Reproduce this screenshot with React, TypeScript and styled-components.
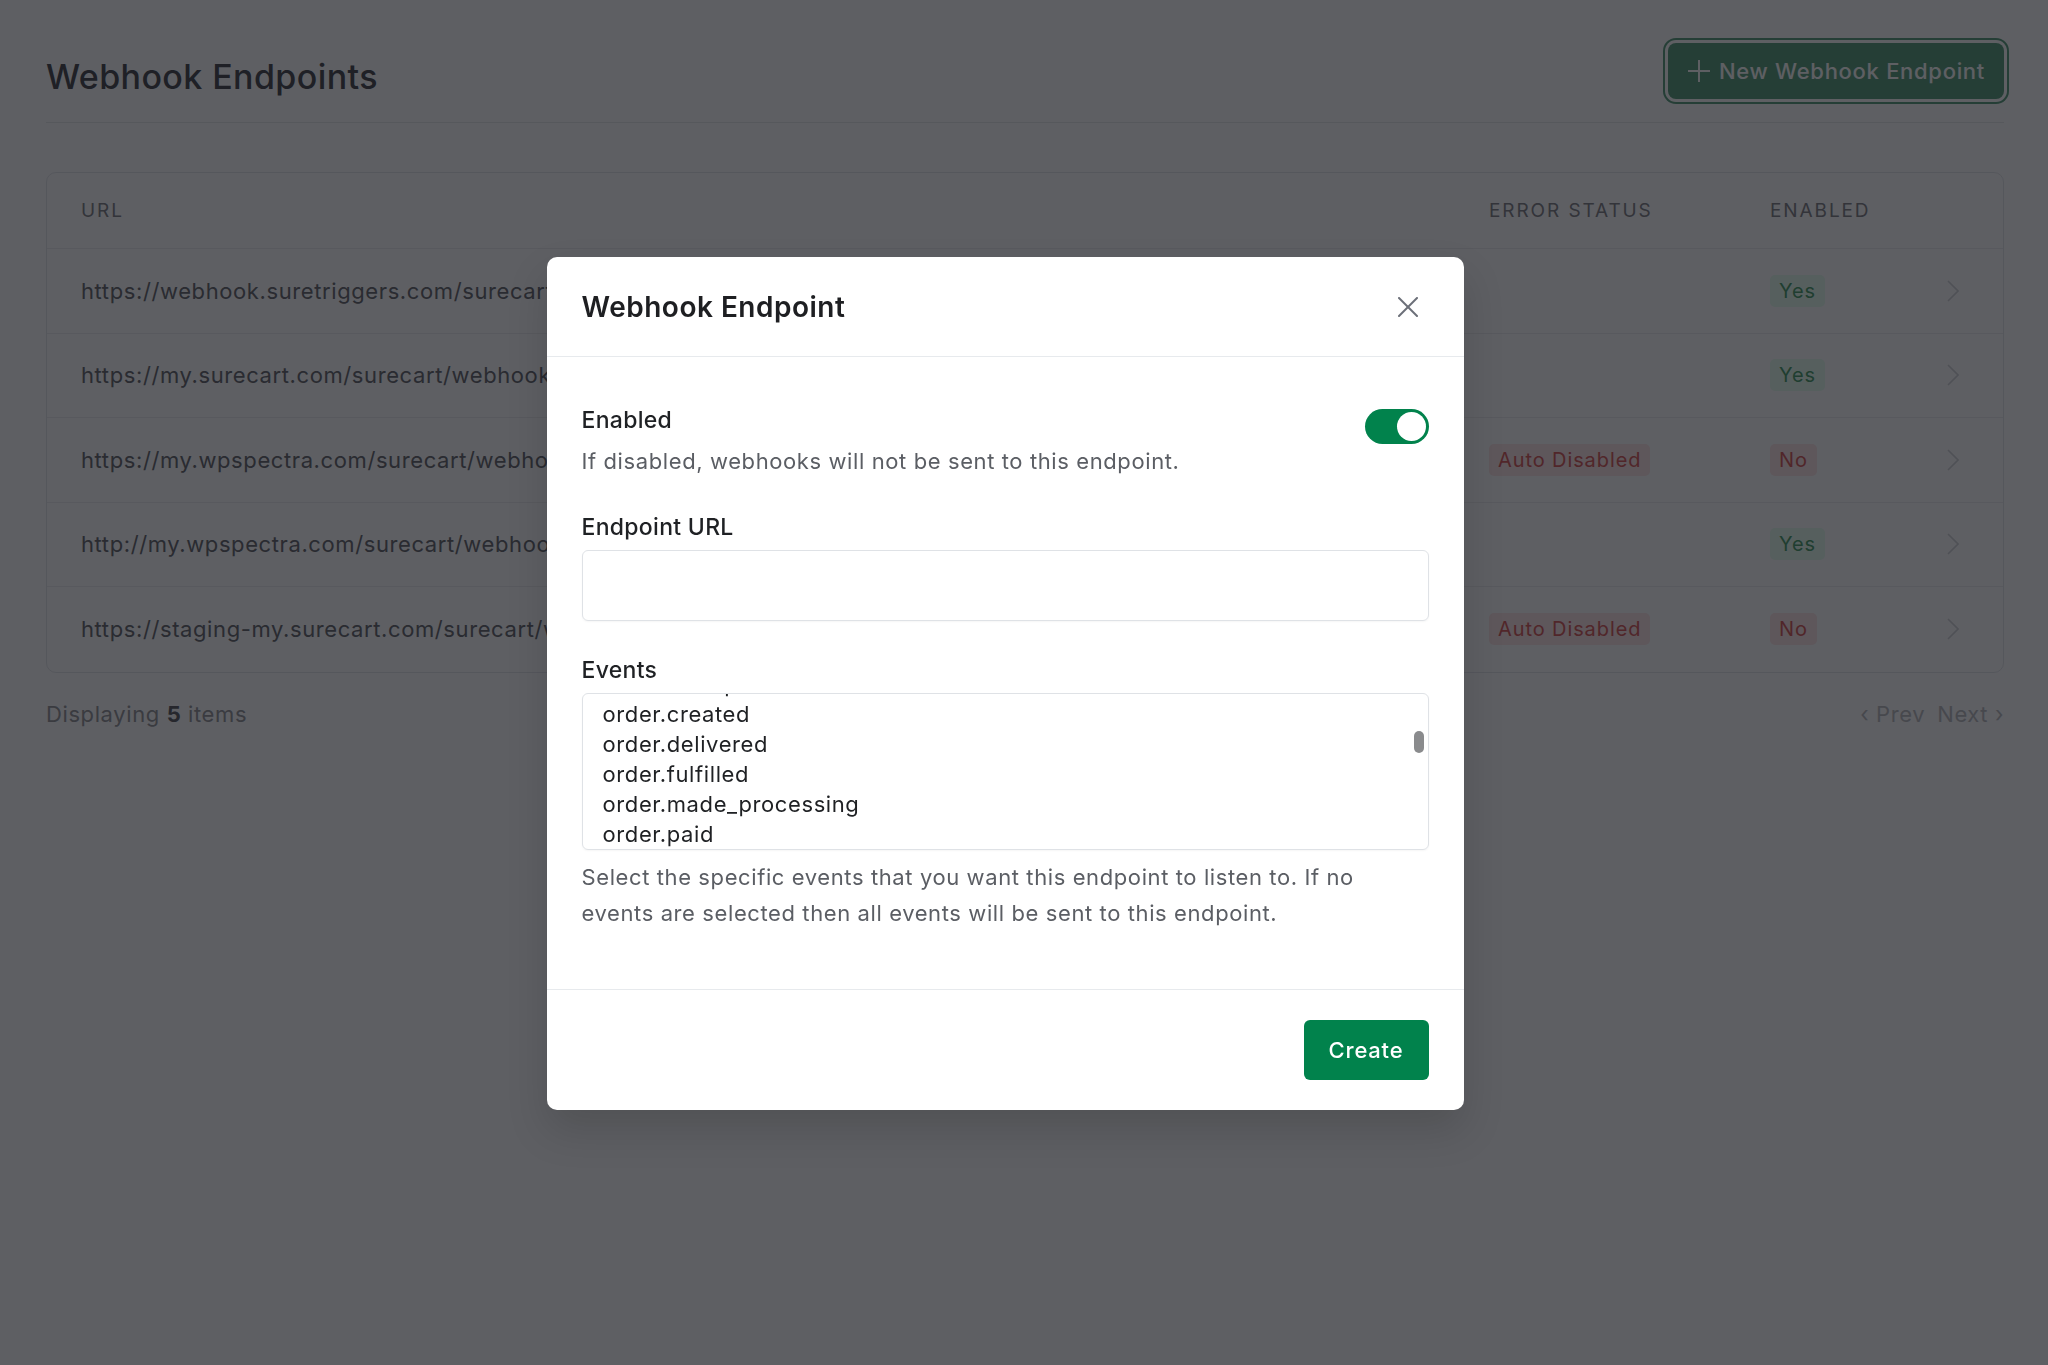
import styled, { createGlobalStyle } from "styled-components";

const GlobalStyle = createGlobalStyle`
  html, body {
    margin: 0;
    padding: 0;
    background: #ffffff;
  }
  body {
    font-family: Inter, "Noto Sans", "Liberation Sans", sans-serif;
    letter-spacing: 0.6px;
    color: #1f2124;
  }
  * {
    box-sizing: border-box;
  }
`;

/* ---------- page behind the dialog ---------- */

const Page = styled.div`
  min-height: 1365px;
  padding: 0 44px 0 46px;
`;

const PageHeader = styled.header`
  display: flex;
  justify-content: space-between;
  align-items: flex-end;
  padding: 43px 0 23px;
  border-bottom: 1px solid #e8e9eb;
`;

const PageTitle = styled.h1`
  margin: 0;
  font-size: 34px;
  line-height: 44px;
  font-weight: 500;
  letter-spacing: 0.4px;
  color: #46484c;
`;

const NewButton = styled.button`
  display: inline-flex;
  align-items: center;
  gap: 9px;
  height: 56px;
  padding: 0 19px 0 20px;
  border: none;
  border-radius: 8px;
  background: #599f7c;
  color: #ffffff;
  font-family: inherit;
  font-size: 22px;
  font-weight: 500;
  letter-spacing: 0.7px;
  box-shadow: 0 0 0 3px #ffffff, 0 0 0 5px #599f7c;
`;

const PlusIcon = styled.svg`
  width: 22px;
  height: 22px;
  stroke: #ffffff;
  stroke-width: 2;
`;

const Card = styled.div`
  margin-top: 49px;
  border: 1px solid #e5e7eb;
  border-radius: 10px;
`;

const Row = styled.div<{ $head?: boolean; $last?: boolean }>`
  display: grid;
  grid-template-columns: 1fr 281px 169px 40px;
  align-items: center;
  height: ${(p) => (p.$head ? 76 : 84.5)}px;
  padding: 0 24px 0 34px;
  border-bottom: ${(p) => (p.$last ? "none" : "1px solid #eeeef0")};
`;

const HeadCell = styled.div`
  font-size: 19px;
  letter-spacing: 1.9px;
  text-transform: uppercase;
  color: #818286;
`;

const UrlCell = styled.div`
  font-size: 22px;
  color: #66686d;
  white-space: nowrap;
  overflow: hidden;
`;

const Badge = styled.span<{ $tone: "ok" | "bad" }>`
  display: inline-flex;
  align-items: center;
  height: 32px;
  padding: 0 9px;
  border-radius: 5px;
  font-size: 20px;
  letter-spacing: 0.9px;
  background: ${(p) => (p.$tone === "ok" ? "#e6fff0" : "#ffe6e6")};
  color: ${(p) => (p.$tone === "ok" ? "#4a9e6a" : "#d85a58")};
`;

const Chevron = styled.svg`
  width: 12px;
  height: 22px;
  margin-left: 8px;
  fill: none;
  stroke: #d4d5d8;
  stroke-width: 1.6;
`;

const TableFooter = styled.div`
  display: flex;
  justify-content: space-between;
  align-items: center;
  margin-top: 26px;
  font-size: 22px;
  line-height: 30px;
  color: #96979a;

  b {
    font-weight: 700;
    color: #5c5d60;
  }
`;

const Pager = styled.div`
  display: flex;
  gap: 12px;
  color: #bbbcbf;
`;

/* ---------- dialog ---------- */

const Backdrop = styled.div`
  position: fixed;
  inset: 0;
  display: flex;
  align-items: center;
  justify-content: center;
  padding: 2px 38px 0 0;
  background: rgba(10, 12, 18, 0.66);
`;

const Dialog = styled.div`
  width: 917px;
  background: #ffffff;
  border-radius: 10px;
  box-shadow: 0 20px 40px rgba(0, 0, 0, 0.15);
  overflow: hidden;
`;

const DialogHeader = styled.div`
  display: flex;
  justify-content: space-between;
  align-items: center;
  height: 100px;
  padding: 0 46px 0 35px;
  border-bottom: 1px solid #e7eaed;
`;

const DialogTitle = styled.h2`
  margin: 0;
  font-size: 28px;
  font-weight: 600;
  letter-spacing: 0.5px;
  color: #1e1f22;
`;

const CloseIcon = styled.svg`
  width: 20px;
  height: 20px;
  stroke: #6b6f78;
  stroke-width: 2;
  stroke-linecap: round;
`;

const DialogBody = styled.div`
  display: flex;
  flex-direction: column;
  padding: 48px 35px 58px 35px;
`;

const ToggleRow = styled.div`
  display: flex;
  justify-content: space-between;
  align-items: flex-start;
`;

const Label = styled.div`
  font-size: 23px;
  line-height: 30px;
  font-weight: 500;
  letter-spacing: 0.3px;
  color: #1f2124;
`;

const Help = styled.div<{ $tall?: boolean }>`
  margin-top: ${(p) => (p.$tall ? 9 : 11)}px;
  font-size: 22px;
  line-height: ${(p) => (p.$tall ? 36 : 30)}px;
  color: #5b5e64;
`;

const Switch = styled.div`
  display: flex;
  justify-content: flex-end;
  align-items: center;
  width: 64px;
  height: 35px;
  margin-top: 4px;
  padding: 0 3px;
  border-radius: 18px;
  background: #01824c;

  &::after {
    content: "";
    width: 29px;
    height: 29px;
    border-radius: 50%;
    background: #ffffff;
  }
`;

const Field = styled.div<{ $gap: number }>`
  margin-top: ${(p) => p.$gap}px;
  display: flex;
  flex-direction: column;
  gap: 8px;
`;

const TextInput = styled.div`
  height: 71px;
  border: 1px solid #dfe2e6;
  border-radius: 6px;
  box-shadow: 0 1px 2px rgba(0, 0, 0, 0.04);
`;

const EventBox = styled.div`
  position: relative;
  height: 157px;
  overflow: hidden;
  border: 1px solid #dfe2e6;
  border-radius: 6px;
  box-shadow: 0 1px 2px rgba(0, 0, 0, 0.04);
`;

const EventList = styled.ul`
  margin: -25px 0 0;
  padding: 0 20px;
  list-style: none;

  li {
    font-size: 22px;
    line-height: 30px;
    color: #1f2124;
  }
`;

const ScrollThumb = styled.div`
  position: absolute;
  top: 37px;
  right: 4px;
  width: 10px;
  height: 22px;
  border-radius: 5px;
  background: #8a8b8d;
`;

const DialogFooter = styled.div`
  display: flex;
  justify-content: flex-end;
  align-items: center;
  height: 121px;
  padding: 0 35px;
  border-top: 1px solid #e7eaed;
`;

const CreateButton = styled.button`
  width: 125px;
  height: 60px;
  border: none;
  border-radius: 6px;
  background: #01824c;
  color: #ffffff;
  font-family: inherit;
  font-size: 22px;
  font-weight: 500;
  letter-spacing: 0.8px;
`;

const endpoints = [
  { url: "https://webhook.suretriggers.com/surecart/webhook/8f2a91c3", error: false, enabled: true },
  { url: "https://my.surecart.com/surecart/webhooks", error: false, enabled: true },
  { url: "https://my.wpspectra.com/surecart/webhooks", error: true, enabled: false },
  { url: "http://my.wpspectra.com/surecart/webhooks", error: false, enabled: true },
  { url: "https://staging-my.surecart.com/surecart/webhooks", error: true, enabled: false },
];

const events = [
  "customer.updated",
  "order.created",
  "order.delivered",
  "order.fulfilled",
  "order.made_processing",
  "order.paid",
  "order.payment_failed",
  "order.shipped",
];

export default function App() {
  return (
    <>
      <GlobalStyle />
      <Page>
        <PageHeader>
          <PageTitle>Webhook Endpoints</PageTitle>
          <NewButton>
            <PlusIcon viewBox="0 0 22 22">
              <line x1="11" y1="0" x2="11" y2="22" />
              <line x1="0" y1="11" x2="22" y2="11" />
            </PlusIcon>
            New Webhook Endpoint
          </NewButton>
        </PageHeader>

        <Card>
          <Row $head>
            <HeadCell>URL</HeadCell>
            <HeadCell>Error Status</HeadCell>
            <HeadCell>Enabled</HeadCell>
            <div />
          </Row>
          {endpoints.map((e, i) => (
            <Row key={e.url} $last={i === endpoints.length - 1}>
              <UrlCell>{e.url}</UrlCell>
              <div>{e.error && <Badge $tone="bad">Auto Disabled</Badge>}</div>
              <div>
                <Badge $tone={e.enabled ? "ok" : "bad"}>{e.enabled ? "Yes" : "No"}</Badge>
              </div>
              <Chevron viewBox="0 0 12 22">
                <polyline points="1,1 11,11 1,21" />
              </Chevron>
            </Row>
          ))}
        </Card>

        <TableFooter>
          <span>
            Displaying <b>5</b> items
          </span>
          <Pager>
            <span>‹ Prev</span>
            <span>Next ›</span>
          </Pager>
        </TableFooter>
      </Page>

      <Backdrop>
        <Dialog>
          <DialogHeader>
            <DialogTitle>Webhook Endpoint</DialogTitle>
            <CloseIcon viewBox="0 0 20 20">
              <line x1="1" y1="1" x2="19" y2="19" />
              <line x1="19" y1="1" x2="1" y2="19" />
            </CloseIcon>
          </DialogHeader>

          <DialogBody>
            <ToggleRow>
              <div>
                <Label>Enabled</Label>
                <Help>If disabled, webhooks will not be sent to this endpoint.</Help>
              </div>
              <Switch />
            </ToggleRow>

            <Field $gap={36}>
              <Label>Endpoint URL</Label>
              <TextInput />
            </Field>

            <Field $gap={34}>
              <Label>Events</Label>
              <EventBox>
                <EventList>
                  {events.map((ev) => (
                    <li key={ev}>{ev}</li>
                  ))}
                </EventList>
                <ScrollThumb />
              </EventBox>
            </Field>

            <Help $tall>
              Select the specific events that you want this endpoint to listen to. If no events are
              selected then all events will be sent to this endpoint.
            </Help>
          </DialogBody>

          <DialogFooter>
            <CreateButton>Create</CreateButton>
          </DialogFooter>
        </Dialog>
      </Backdrop>
    </>
  );
}
